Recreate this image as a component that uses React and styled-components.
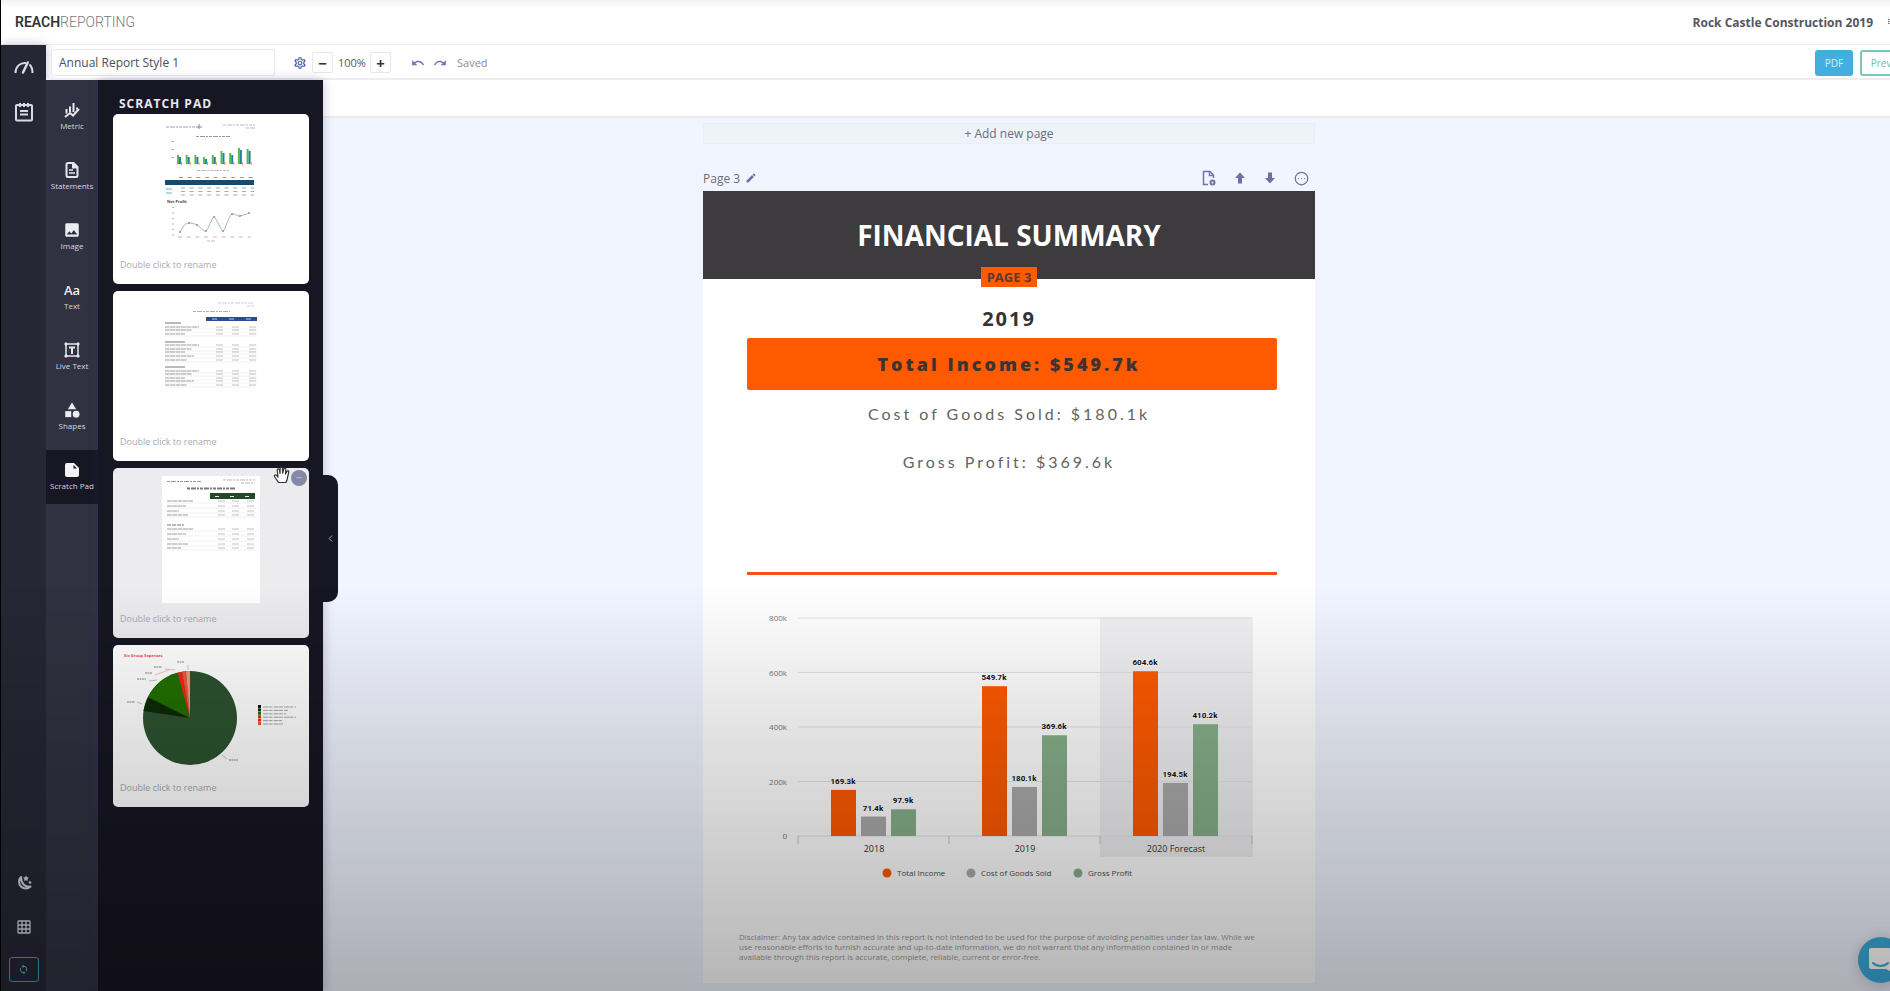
import React from "react";
import styled, { createGlobalStyle, css } from "styled-components";
import {
  MdCategory,
  MdEdit,
  MdGridOn,
  MdImage,
  MdOutlineSettings,
  MdRedo,
  MdSync,
  MdUndo,
} from "react-icons/md";
import { CircleEllipsis, ChevronLeft } from "lucide-react";

const GlobalStyle = createGlobalStyle`
  * {
    box-sizing: border-box;
  }
  body {
    margin: 0;
    overflow: hidden;
    font-family: "Open Sans", "Noto Sans", sans-serif;
    color: #55565f;
  }
  button, input {
    font-family: inherit;
    color: inherit;
  }
  button {
    padding: 0;
    border: none;
    background: none;
    cursor: pointer;
  }
  h1, h2, p {
    margin: 0;
  }
`;

/* ---------- icons ---------- */

const GaugeIcon = () => (
  <svg width="20" height="16" viewBox="0 0 20 16" fill="none" stroke="#d9dae2" strokeWidth="2">
    <path d="M1.500 14C1.500 7.500 6 3.500 12 4" />
    <path d="M15.500 5.500C17.700 7.500 18.500 10.500 18.500 14" />
    <path d="M13.800 3.500L9 13.500" strokeWidth="2.500" strokeLinecap="round" />
  </svg>
);

const NotesIcon = () => (
  <svg width="20" height="20" viewBox="0 0 20 20" fill="none" stroke="#d9dae2" strokeWidth="2">
    <rect x="2" y="3" width="16" height="15.500" rx="1" />
    <path d="M6 1v4M10 1v4M14 1v4M6 9h8M6 12.500h8" />
  </svg>
);

const MetricIcon = () => (
  <svg width="16" height="16" viewBox="0 0 16 16" fill="none" stroke="#e6e7ee" strokeWidth="2">
    <path d="M2.500 7V11.500M6 4.500v5.500M9.500 1v9M13 5.500v2" />
    <path d="M1 15L6 11l3 2.500L15 7" />
  </svg>
);

const StatementsIcon = () => (
  <svg width="16" height="18" viewBox="0 0 16 18" fill="none" stroke="#e6e7ee" strokeWidth="2">
    <path d="M9.500 2H4a1.500 1.500 0 0 0-1.500 1.500V14.500A1.500 1.500 0 0 0 4 16h8a1.500 1.500 0 0 0 1.500-1.500V6z" />
    <path d="M9 1.500V6.500H14" fill="#e6e7ee" />
    <path d="M5 9h4M5 12h6" strokeWidth="1.500" />
  </svg>
);

const LiveTextIcon = () => (
  <svg width="16" height="16" viewBox="0 0 16 16" fill="none" stroke="#e6e7ee">
    <rect x="2" y="2" width="12" height="12" strokeWidth="1.500" />
    <path d="M5 5.500h6M8 5.500V12" strokeWidth="2" />
    <path d="M1 1h2v2H1zM13 1h2v2h-2zM1 13h2v2H1zM13 13h2v2h-2z" fill="#e6e7ee" />
  </svg>
);

const ScratchIcon = () => (
  <svg width="16" height="16" viewBox="0 0 16 16">
    <path d="M3 1h7l5 5v7a2 2 0 0 1-2 2H3a2 2 0 0 1-2-2V3a2 2 0 0 1 2-2z" fill="#f1f1f6" />
    <path d="M9.500 3v3.500H13z" fill="#171623" />
  </svg>
);

const MoonIcon = () => (
  <svg width="16" height="16" viewBox="0 0 16 16" fill="none" stroke="#d3d4de" strokeWidth="2">
    <path d="M5 2A6.500 6.500 0 1 0 14.500 11.500C9.500 12.500 5 9 5 2z" strokeLinejoin="round" />
    <path d="M10 0.500l1 1.700 1.900.4-1.300 1.500.2 2L10 5.300l-1.800.8.200-2L7.100 2.600 9 2.200z" fill="#d3d4de" stroke="none" />
    <circle cx="14" cy="7.500" r="1.300" fill="#d3d4de" stroke="none" />
  </svg>
);

const PageAddIcon = () => (
  <svg width="14" height="16" viewBox="0 0 14 16" fill="none" stroke="#7275a6" strokeWidth="1.500">
    <path d="M6 14.500H1.500v-13H8L11.500 5v3" />
    <path d="M7.500 1.500V5.500h4" />
    <circle cx="10.500" cy="12.500" r="2" strokeWidth="2" />
  </svg>
);

const ArrowIcon = ({ down }) => (
  <svg width="12" height="12" viewBox="0 0 12 12" fill="#6d70a3">
    <path d={down ? "M6 11.500L11 6H8V0.500H4V6H1z" : "M6 0.500L11 6H8v5.500H4V6H1z"} />
  </svg>
);

const HandIcon = () => (
  <svg width="18" height="18" viewBox="0 0 18 18" fill="#fff" stroke="#333" strokeWidth="1.200" strokeLinejoin="round">
    <path d="M5.500 16.500L1.500 10.500C0.800 9 2.500 8.200 3.500 9.400L5 11 4.200 4c0-1.500 1.900-1.500 2.200 0L7 7.500 7.200 2.300c0-1.500 2.100-1.500 2.200 0L9.700 7.200l1-4.200c.3-1.400 2.200-1 2.100.4L12.500 8l1.400-2.600c.7-1.200 2.200-.5 1.900.8L14.500 11.500c-.2 2-.7 3-1.500 5z" />
  </svg>
);

const ChatIcon = () => (
  <svg width="28" height="28" viewBox="0 0 28 28">
    <path d="M4 2h18a3 3 0 0 1 3 3v21l-6-3H4a2 2 0 0 1-2-2V4a2 2 0 0 1 2-2z" fill="#fff" />
    <path d="M6 17c4 4 11 4 15 0" fill="none" stroke="#3cabdc" strokeWidth="2" strokeLinecap="round" />
  </svg>
);

/* ---------- scratch pad previews ---------- */

const greek = { stroke: "#8b8b8b", strokeDasharray: "3 1 5 1 2 1", opacity: 0.6 };

const DashboardThumb = () => {
  const heights = [9, 9, 9, 7, 9, 13, 11, 16, 15];
  return (
    <svg width="100%" height="140" viewBox="0 0 196 140">
      <path d="M53 13h30" {...greek} stroke="#666" />
      <path d="M86 10v5M83 13h6" stroke="#888" />
      <path d="M110 11h32M133 14h9" {...greek} />
      <path d="M83 22.500h34" {...greek} stroke="#555" />
      {heights.map((h, i) => (
        <g key={i}>
          <rect x={64 + i * 8.700} y={50 - h} width="2" height={h} fill="#58b947" />
          <rect x={66 + i * 8.700} y={52 - h} width="2" height={h - 2} fill="#2683a0" />
          <rect x={68 + i * 8.700} y="48" width="1" height="3" fill="#e58a5c" />
        </g>
      ))}
      <path d="M60 27v24" stroke="#aaa" strokeDasharray="1 7" strokeWidth="2" />
      <path d="M84 56.500h32" {...greek} />
      <path d="M66 63.500h75" stroke="#999" strokeDasharray="4 4.700" />
      <rect x="52" y="66" width="89" height="5" fill="#174a70" />
      <path d="M53 75h6M53 79h6" stroke="#63b4d0" />
      <path d="M68 74h73M68 77.500h73M68 81h73" stroke="#aaa" strokeDasharray="4 4.700" />
      <text x="54" y="89" fontSize="4" fontWeight="700" fill="#444">Net Profit</text>
      <path d="M60 93v30" stroke="#bbb" strokeDasharray="1 4.500" strokeWidth="2" />
      <path
        d="M67 118C70 113 72 109 76 109S82 110 84 111 91 118 93 117 99 103 101 103 108 117 110 117 116 101 119 100 125 103 127 102 133 101 136 99"
        fill="none"
        stroke="#8aa3b3"
        strokeWidth="0.800"
      />
      {[[67, 118], [76, 109], [84, 111], [93, 117], [101, 103], [110, 117], [119, 100], [127, 102], [136, 99]].map(
        ([x, y]) => (
          <circle key={x} cx={x} cy={y} r="1" fill="#8298a8" />
        )
      )}
      <path d="M65 123h73" stroke="#bbb" strokeDasharray="4 4.700" />
      <path d="M94 127h8" {...greek} />
    </svg>
  );
};

const Rows = ({ ys, x, width, cols }) => (
  <g>
    {ys.map((y, i) => (
      <g key={y}>
        <path d={`M${x} ${y + 2}H144`} stroke="#e3e3e3" strokeWidth="0.500" />
        <path d={`M${x} ${y}h${width - ((i * 7) % 16)}`} stroke="#777" strokeDasharray="4 0.500 6 0.500" opacity="0.700" />
        {cols.map((c) => (
          <path key={c} d={`M${c} ${y}h7`} stroke="#999" opacity="0.600" />
        ))}
      </g>
    ))}
  </g>
);

const StatementThumb = () => (
  <svg width="100%" height="140" viewBox="0 0 196 140">
    <path d="M105 12h36M134 15h7" {...greek} opacity="0.400" />
    <path d="M80 20.500h37" {...greek} stroke="#777" />
    <rect x="93" y="26" width="51" height="4" fill="#2b4a9c" />
    <path d="M99 28h5M116 28h5M133 28h5" stroke="#b9c6ea" />
    <Rows ys={[36, 39, 43]} x={52} width={34} cols={[103, 119, 136]} />
    <Rows ys={[54, 58, 61, 65, 69]} x={52} width={34} cols={[103, 119, 136]} />
    <Rows ys={[80, 83, 87, 90, 94]} x={52} width={34} cols={[103, 119, 136]} />
    <path d="M52 32h16M52 51h20M52 76h20" stroke="#777" />
  </svg>
);

const SummaryThumb = () => (
  <svg width="100%" height="140" viewBox="0 0 196 140">
    <rect x="49" y="8" width="98" height="127" fill="#fff" />
    <path d="M54 13.500h34" {...greek} stroke="#555" />
    <path d="M110 12h32M128 15h14" {...greek} />
    <path d="M74 20.500h49" {...greek} stroke="#222" strokeWidth="2" />
    <rect x="97" y="25" width="45" height="6" fill="#23482a" />
    <path d="M102 28.500h4M117 28.500h4M132 28.500h4" stroke="#dfe9df" />
    <Rows ys={[33, 38, 43, 47]} x={54} width={26} cols={[105, 119, 134]} />
    <Rows ys={[61, 66, 71, 76, 80]} x={54} width={26} cols={[105, 119, 134]} />
    <path d="M54 57h17" stroke="#777" strokeDasharray="4 1" />
  </svg>
);

const PieThumb = () => (
  <svg width="100%" height="132" viewBox="0 0 196 132">
    <text x="11" y="12" fontSize="4" fontWeight="700" fill="#ee4b5c">Six Group Expenses</text>
    <circle cx="77" cy="73" r="47" fill="#2d5230" />
    <path d="M77 73L30.500 66A47 47 0 0 1 35 52z" fill="#0c2b08" />
    <path d="M77 73L35 52A47 47 0 0 1 64.500 27.700z" fill="#227000" />
    <path d="M77 73L64.500 27.700A47 47 0 0 1 69 26.700z" fill="#e82b1c" />
    <path d="M77 73L69 26.700A47 47 0 0 1 73 26.200z" fill="#f4543c" />
    <path d="M77 73L73 26.200A47 47 0 0 1 77 26z" fill="#f49a80" />
    <path d="M52 24l10 1M42 30l14-5M75 20v5" stroke="#ec9a9a" strokeWidth="0.600" />
    <path d="M36 36l8-1M24 57l5 2M109 110l5 4" stroke="#999" strokeWidth="0.600" />
    <path d="M41 22h8M32 28h7M24 34h9M64 17h7M14 57h8M116 115h9" stroke="#888" strokeDasharray="2 0.500" />
    {["#111", "#0c2b08", "#227000", "#e82b1c", "#e82b1c", "#f4543c"].map((fill, i) => (
      <g key={i}>
        <rect x="145" y={60 + i * 3.400} width="3" height="3" fill={fill} />
        <path d={`M150 ${62 + i * 3.400}h${[33, 25, 23, 33, 19, 20][i]}`} stroke="#aaa" strokeDasharray="5 0.500 4 1" />
      </g>
    ))}
  </svg>
);

/* ---------- chart ---------- */

const SERIES = [
  { name: "Total Income", color: "#ff5a00", x: 124, values: [169.3, 549.7, 604.6] },
  { name: "Cost of Goods Sold", color: "#ababab", x: 208, values: [71.4, 180.1, 194.5] },
  { name: "Gross Profit", color: "#88b08b", x: 315, values: [97.9, 369.6, 410.2] },
];
const YEARS = ["2018", "2019", "2020 Forecast"];
const BASE = 226;
const yFor = (v) => BASE - (v * 218) / 800;

const IncomeChart = () => (
  <ChartSvg viewBox="0 0 500 280" role="img" aria-label="Income by year">
    <rect x="337" y="7" width="153" height="240" fill="#ebebef" opacity="0.700" />
    {[0, 200, 400, 600, 800].map((t) => (
      <g key={t}>
        <path d={`M35 ${yFor(t)}H489`} stroke="#e4e4e6" />
        <text className="tick" x="24" y={yFor(t) + 3} textAnchor="end">
          {t ? `${t}k` : "0"}
        </text>
      </g>
    ))}
    {[35, 186, 337, 489].map((x) => (
      <path key={x} d={`M${x} ${BASE}v8`} stroke="#c4c6cc" />
    ))}
    {YEARS.map((year, i) => (
      <g key={year}>
        {SERIES.map((s, j) => {
          const x = 68 + i * 151 + j * 30;
          const y = yFor(s.values[i]);
          return (
            <g key={s.name}>
              <rect x={x} y={y} width="25" height={BASE - y} fill={s.color} />
              <text className="value" x={x + 12} y={y - 6} textAnchor="middle">
                {s.values[i].toFixed(1)}k
              </text>
            </g>
          );
        })}
        <text className="year" x={111 + i * 151} y="242" textAnchor="middle">
          {year}
        </text>
      </g>
    ))}
    {SERIES.map((s) => (
      <g key={s.name}>
        <circle cx={s.x} cy="263" r="4.500" fill={s.color} />
        <text className="legend" x={s.x + 10} y="266">
          {s.name}
        </text>
      </g>
    ))}
  </ChartSvg>
);

/* ---------- page ---------- */

const AaMark = () => <TextMark>Aa</TextMark>;

const TOOLS = [
  { label: "Metric", icon: <MetricIcon /> },
  { label: "Statements", icon: <StatementsIcon /> },
  { label: "Image", icon: <MdImage size={18} /> },
  { label: "Text", icon: <AaMark /> },
  { label: "Live Text", icon: <LiveTextIcon /> },
  { label: "Shapes", icon: <MdCategory size={18} /> },
  { label: "Scratch Pad", icon: <ScratchIcon />, active: true },
];

const PADS = [
  { id: "dashboard", thumb: <DashboardThumb /> },
  { id: "statement", thumb: <StatementThumb /> },
  { id: "summary", thumb: <SummaryThumb />, hovered: true },
  { id: "pie", thumb: <PieThumb /> },
];

const App = () => (
  <Shell>
    <GlobalStyle />
    <TopBar>
      <Logo>
        <b>REACH</b>REPORTING
      </Logo>
      <Company>Rock Castle Construction 2019</Company>
      <Kebab aria-label="Company menu">
        <svg width="4" height="12" viewBox="0 0 4 12" fill="#4563a5">
          <path d="M0 0h3v2H0zM0 4h3v2H0zM0 8h3v2H0z" />
        </svg>
      </Kebab>
    </TopBar>
    <Body>
      <Rail>
        <IconButton aria-label="Dashboard"><GaugeIcon /></IconButton>
        <IconButton aria-label="Reports"><NotesIcon /></IconButton>
        <RailFoot>
          <IconButton aria-label="Dark mode"><MoonIcon /></IconButton>
          <IconButton aria-label="Grid"><MdGridOn size={16} /></IconButton>
          <SyncButton aria-label="Sync"><MdSync size={11} /></SyncButton>
        </RailFoot>
      </Rail>
      <Column>
        <Toolbar>
          <NameInput aria-label="Report name" defaultValue="Annual Report Style 1" />
          <IconButton aria-label="Settings" $color="#4563a5"><MdOutlineSettings size={14} /></IconButton>
          <Zoom>
            <StepButton aria-label="Zoom out">−</StepButton>
            <span>100%</span>
            <StepButton aria-label="Zoom in">+</StepButton>
          </Zoom>
          <History>
            <IconButton aria-label="Undo" $color="#7275b0"><MdUndo size={14} /></IconButton>
            <IconButton aria-label="Redo" $color="#7275b0"><MdRedo size={14} /></IconButton>
            <Saved>Saved</Saved>
          </History>
          <PdfButton>PDF</PdfButton>
          <PreviewButton>Preview</PreviewButton>
        </Toolbar>
        <Workspace>
          <ToolRail>
            {TOOLS.map((tool) => (
              <Tool key={tool.label} $active={tool.active}>
                <ToolGlyph>{tool.icon}</ToolGlyph>
                {tool.label}
              </Tool>
            ))}
          </ToolRail>
          <Drawer>
            <DrawerTitle>SCRATCH PAD</DrawerTitle>
            {PADS.map((pad) => (
              <PadCard key={pad.id} $hovered={pad.hovered}>
                {pad.thumb}
                <RenameInput aria-label="Name" placeholder="Double click to rename" />
                {pad.hovered && (
                  <>
                    <PadMenu aria-label="More">•••</PadMenu>
                    <Cursor><HandIcon /></Cursor>
                  </>
                )}
              </PadCard>
            ))}
            <Handle aria-label="Collapse panel"><ChevronLeft size={11} /></Handle>
          </Drawer>
          <Main>
            <SubBar />
            <Canvas>
              <AddPage>+ Add new page</AddPage>
              <PageBar>
                <span>Page 3</span>
                <IconButton aria-label="Rename page" $color="#6d70a3"><MdEdit size={12} /></IconButton>
                <PageActions>
                  <IconButton aria-label="Add page"><PageAddIcon /></IconButton>
                  <IconButton aria-label="Move up"><ArrowIcon /></IconButton>
                  <IconButton aria-label="Move down"><ArrowIcon down /></IconButton>
                  <IconButton aria-label="Page menu" $color="#6d70a3"><CircleEllipsis size={15} strokeWidth={2} /></IconButton>
                </PageActions>
              </PageBar>
              <Paper>
                <Banner>
                  <h1>FINANCIAL SUMMARY</h1>
                  <PageBadge>PAGE 3</PageBadge>
                </Banner>
                <Year>2019</Year>
                <IncomeBar>Total Income: $549.7k</IncomeBar>
                <Figure>Cost of Goods Sold: $180.1k</Figure>
                <Figure>Gross Profit: $369.6k</Figure>
                <Rule />
                <IncomeChart />
                <Disclaimer>
                  Disclaimer: Any tax advice contained in this report is not intended to be used for the purpose of
                  avoiding penalties under tax law. While we use reasonable efforts to furnish accurate and up-to-date
                  information, we do not warrant that any information contained in or made available through this
                  report is accurate, complete, reliable, current or error-free.
                </Disclaimer>
              </Paper>
            </Canvas>
          </Main>
        </Workspace>
      </Column>
    </Body>
    <ChatButton aria-label="Open chat"><ChatIcon /></ChatButton>
    <Shade />
  </Shell>
);

const Shell = styled.div`
  display: flex;
  flex-direction: column;
  height: 100vh;
  overflow: hidden;
  border-left: 1px solid #000;
  background: #fff;
`;

const TopBar = styled.header`
  display: flex;
  align-items: center;
  flex: none;
  height: 45px;
  padding-left: 14px;
  border-bottom: 1px solid #eeedf1;
  background: linear-gradient(#f1f1f1, #fff 8px);
`;

const Logo = styled.div`
  font-family: Roboto, sans-serif;
  font-size: 14px;
  font-weight: 300;
  color: #77777a;
  b {
    font-weight: 600;
    color: #333;
  }
`;

const Company = styled.div`
  margin-left: auto;
  font-size: 12px;
  font-weight: 700;
`;

const Kebab = styled.button`
  display: flex;
  flex: none;
  width: 17px;
  padding-left: 15px;
  overflow: hidden;
`;

const Body = styled.div`
  display: flex;
  flex: 1;
  min-height: 0;
`;

const Rail = styled.nav`
  display: flex;
  flex-direction: column;
  align-items: center;
  flex: none;
  gap: 27px;
  width: 45px;
  padding: 14px 0 9px;
  background: #252734;
  box-shadow: 0 0 10px rgba(60, 50, 130, 0.3);
`;

const RailFoot = styled.div`
  display: flex;
  flex-direction: column;
  align-items: center;
  gap: 28px;
  margin-top: auto;
  color: #d3d4de;
`;

const IconButton = styled.button`
  display: flex;
  align-items: center;
  justify-content: center;
  ${({ $color }) => $color && css`
    color: ${$color};
  `}
`;

const SyncButton = styled(IconButton)`
  width: 30px;
  height: 25px;
  margin-top: -6px;
  border: 1px solid #419dbd;
  border-radius: 3px;
  color: #53b4d3;
`;

const Column = styled.div`
  display: flex;
  flex-direction: column;
  flex: 1;
  min-width: 0;
`;

const Toolbar = styled.div`
  display: flex;
  align-items: center;
  flex: none;
  height: 35px;
  padding: 2px 0 0 5px;
  border-bottom: 2px solid #efedf2;
  font-size: 12px;
  overflow: hidden;
`;

const NameInput = styled.input`
  width: 224px;
  height: 27px;
  margin-right: 18px;
  padding: 0 7px;
  border: 1px solid #eae9ef;
  border-radius: 2px;
  font-size: 12px;
  color: #4b4c55;
`;

const Zoom = styled.div`
  display: flex;
  align-items: center;
  gap: 5px;
  margin-left: 5px;
  span {
    width: 27px;
    text-align: center;
    font-size: 11px;
  }
`;

const StepButton = styled.button`
  width: 21px;
  height: 21px;
  border: 1px solid #e7e6ec;
  border-radius: 2px;
  font-size: 15px;
  font-weight: 700;
  line-height: 18px;
  color: #333;
`;

const History = styled.div`
  display: flex;
  align-items: center;
  gap: 8px;
  margin-left: 20px;
`;

const Saved = styled.span`
  margin-left: 2px;
  font-size: 11px;
  color: #8a8b98;
`;

const PdfButton = styled.button`
  flex: none;
  width: 38px;
  height: 26px;
  margin-left: auto;
  border-radius: 3px;
  background: #45aee0;
  font-size: 10px;
  color: #d5effb;
`;

const PreviewButton = styled.button`
  flex: none;
  width: 58px;
  height: 26px;
  margin: 0 -28px 0 7px;
  border: 2px solid #7bc8b6;
  border-radius: 3px;
  font-size: 10px;
  color: #6cc0ae;
`;

const Workspace = styled.div`
  display: flex;
  flex: 1;
  min-height: 0;
`;

const ToolRail = styled.nav`
  display: flex;
  flex-direction: column;
  flex: none;
  gap: 6px;
  width: 52px;
  padding-top: 10px;
  background: #303241;
`;

const Tool = styled.button`
  display: flex;
  flex-direction: column;
  align-items: center;
  justify-content: center;
  height: 54px;
  padding-bottom: 2px;
  font-size: 8px;
  line-height: 12px;
  color: #d6d7e0;
  background: ${({ $active }) => ($active ? "#171623" : "transparent")};
`;

const ToolGlyph = styled.span`
  display: flex;
  align-items: center;
  height: 20px;
  color: #ecedf2;
`;

const TextMark = styled.span`
  font-size: 13px;
  font-weight: 600;
`;

const Drawer = styled.aside`
  position: relative;
  display: flex;
  flex-direction: column;
  flex: none;
  gap: 7px;
  width: 225px;
  padding: 14px 14px 0 15px;
  background: #171623;
  box-shadow: 0 0 10px rgba(60, 50, 130, 0.3);
  z-index: 1;
`;

const DrawerTitle = styled.h2`
  margin: 0 0 -7px 6px;
  font-size: 12px;
  line-height: 20px;
  font-weight: 700;
  letter-spacing: 1px;
  color: #e8e8ee;
`;

const PadCard = styled.div`
  position: relative;
  display: flex;
  flex-direction: column;
  padding-bottom: 10px;
  border-radius: 5px;
  background: ${({ $hovered }) => ($hovered ? "#ececee" : "#fff")};
  svg {
    display: block;
  }
`;

const RenameInput = styled.input`
  width: 100%;
  height: 20px;
  padding: 0 7px;
  border: none;
  background: none;
  font-size: 9px;
  &::placeholder {
    color: #a9a9ad;
  }
`;

const PadMenu = styled.button`
  position: absolute;
  top: 2px;
  right: 2px;
  width: 16px;
  height: 16px;
  border-radius: 50%;
  background: #8488a6;
  font-size: 5px;
  color: #d5d7e6;
`;

const Cursor = styled.span`
  position: absolute;
  top: -2px;
  right: 18px;
`;

const Handle = styled.button`
  position: absolute;
  top: 395px;
  left: 100%;
  display: flex;
  align-items: center;
  justify-content: center;
  width: 15px;
  height: 127px;
  border-radius: 0 10px 10px 0;
  background: #171623;
  color: #b4b5c4;
`;

const Main = styled.main`
  display: flex;
  flex-direction: column;
  flex: 1;
  min-width: 0;
`;

const SubBar = styled.div`
  flex: none;
  height: 38px;
  border-bottom: 2px solid #ecebf2;
`;

const Canvas = styled.section`
  display: flex;
  flex-direction: column;
  align-items: center;
  flex: 1;
  min-height: 0;
  padding: 5px 195px 8px 0;
  background: #f1f5ff;
`;

const AddPage = styled.button`
  flex: none;
  width: 612px;
  height: 21px;
  border: 1px solid #ebeef6;
  background: #eef2f9;
  font-size: 12px;
  line-height: 18px;
  color: #6c6d7c;
`;

const PageBar = styled.div`
  display: flex;
  align-items: center;
  flex: none;
  gap: 5px;
  width: 612px;
  height: 24px;
  margin-top: 22px;
  margin-bottom: 1px;
  padding-right: 6px;
  font-size: 12px;
  color: #6c6d7c;
`;

const PageActions = styled.div`
  display: flex;
  align-items: center;
  gap: 18px;
  margin-left: auto;
`;

const Paper = styled.article`
  display: flex;
  flex-direction: column;
  align-items: center;
  flex: 1;
  width: 612px;
  background: #fff;
`;

const Banner = styled.div`
  position: relative;
  display: flex;
  justify-content: center;
  flex: none;
  width: 100%;
  height: 88px;
  padding-top: 26px;
  background: #3d3b3d;
  h1 {
    font-size: 28px;
    line-height: 36px;
    font-weight: 700;
    color: #fff;
  }
`;

const PageBadge = styled.span`
  position: absolute;
  bottom: -8px;
  padding: 0 6px;
  background: #ff5a00;
  font-size: 13px;
  line-height: 20px;
  font-weight: 700;
  color: #5a3a30;
`;

const Year = styled.p`
  margin-top: 28px;
  font-size: 20px;
  line-height: 24px;
  font-weight: 700;
  letter-spacing: 2px;
  color: #333;
`;

const IncomeBar = styled.div`
  width: 530px;
  margin: 7px 0 12px 6px;
  padding-right: 6px;
  border-radius: 2px;
  background: #ff5a00;
  font-size: 18px;
  line-height: 52px;
  font-weight: 800;
  letter-spacing: 3px;
  text-align: center;
  color: #3f3331;
`;

const Figure = styled.p`
  margin-bottom: 24px;
  font-family: Lato, sans-serif;
  font-size: 16px;
  line-height: 24px;
  letter-spacing: 3px;
  color: #626262;
`;

const Rule = styled.hr`
  width: 530px;
  height: 3px;
  margin: 74px 0 35px 6px;
  border: none;
  background: #f4511e;
`;

const ChartSvg = styled.svg`
  flex: none;
  width: 500px;
  height: 280px;
  margin-left: 8px;
  text {
    font-size: 9px;
    fill: #4c4c4c;
  }
  .tick {
    font-size: 8px;
    fill: #777;
  }
  .year {
    fill: #333;
  }
  .value {
    font-family: "Liberation Sans Narrow", Roboto, sans-serif;
    font-size: 8px;
    font-weight: 700;
    fill: #111;
    paint-order: stroke;
    stroke: #fff;
    stroke-opacity: 0.6;
    stroke-width: 2px;
  }
  .legend {
    font-size: 8px;
  }
`;

const Disclaimer = styled.p`
  width: 540px;
  margin: auto 0 21px;
  padding-right: 16px;
  font-size: 8px;
  line-height: 10px;
  color: #999;
`;

const ChatButton = styled.button`
  position: fixed;
  right: -14px;
  bottom: 8px;
  display: flex;
  align-items: center;
  justify-content: center;
  width: 46px;
  height: 46px;
  border-radius: 50%;
  background: #3cabdc;
  box-shadow: 0 2px 14px rgba(40, 30, 60, 0.2);
`;

const Shade = styled.div`
  position: fixed;
  inset: 0;
  z-index: 5;
  pointer-events: none;
  background: linear-gradient(
    transparent 59%,
    rgba(0, 0, 0, 0.12) 75%,
    rgba(0, 0, 0, 0.2) 87%,
    rgba(0, 0, 0, 0.29)
  );
`;

export default App;
